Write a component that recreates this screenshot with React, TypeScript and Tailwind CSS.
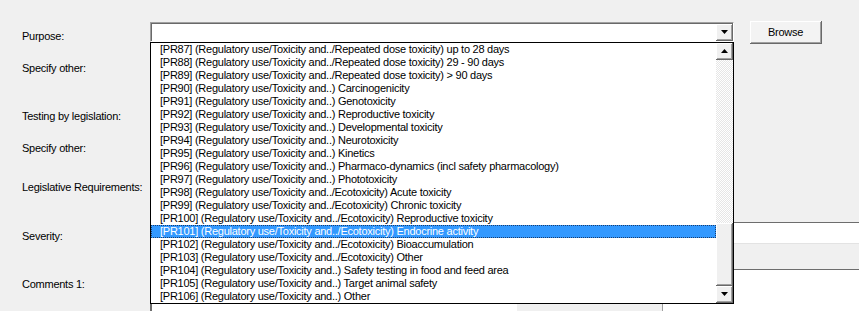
const options = [
  "[PR87] (Regulatory use/Toxicity and../Repeated dose toxicity) up to 28 days",
  "[PR88] (Regulatory use/Toxicity and../Repeated dose toxicity) 29 - 90 days",
  "[PR89] (Regulatory use/Toxicity and../Repeated dose toxicity) > 90 days",
  "[PR90] (Regulatory use/Toxicity and..) Carcinogenicity",
  "[PR91] (Regulatory use/Toxicity and..) Genotoxicity",
  "[PR92] (Regulatory use/Toxicity and..) Reproductive toxicity",
  "[PR93] (Regulatory use/Toxicity and..) Developmental toxicity",
  "[PR94] (Regulatory use/Toxicity and..) Neurotoxicity",
  "[PR95] (Regulatory use/Toxicity and..) Kinetics",
  "[PR96] (Regulatory use/Toxicity and..) Pharmaco-dynamics (incl safety pharmacology)",
  "[PR97] (Regulatory use/Toxicity and..) Phototoxicity",
  "[PR98] (Regulatory use/Toxicity and../Ecotoxicity) Acute toxicity",
  "[PR99] (Regulatory use/Toxicity and../Ecotoxicity) Chronic toxicity",
  "[PR100] (Regulatory use/Toxicity and../Ecotoxicity) Reproductive toxicity",
  "[PR101] (Regulatory use/Toxicity and../Ecotoxicity) Endocrine activity",
  "[PR102] (Regulatory use/Toxicity and../Ecotoxicity) Bioaccumulation",
  "[PR103] (Regulatory use/Toxicity and../Ecotoxicity) Other",
  "[PR104] (Regulatory use/Toxicity and..) Safety testing in food and feed area",
  "[PR105] (Regulatory use/Toxicity and..) Target animal safety",
  "[PR106] (Regulatory use/Toxicity and..) Other",
];

const selectedIndex = 14;

const Arrow = ({ up }: { up?: boolean }) => (
  <svg width="7" height="4" viewBox="0 0 7 4">
    {up ? (
      <polygon points="0,4 7,4 3.5,0" fill="#000" />
    ) : (
      <polygon points="0,0 7,0 3.5,4" fill="#000" />
    )}
  </svg>
);

const ScrollButton = ({ up }: { up?: boolean }) => (
  <div className="flex h-[17px] w-[17px] items-center justify-center border-r border-b border-[#696969] bg-[#f0f0f0] shadow-[inset_1px_1px_0_#fff,inset_-1px_-1px_0_#a0a0a0]">
    <Arrow up={up} />
  </div>
);

const Label = ({ text, mt }: { text: string; mt: string }) => (
  <div className={`w-[150px] shrink-0 whitespace-nowrap pl-[22px] leading-[13px] ${mt}`}>{text}</div>
);

const App = () => {
  return (
    <div
      className="relative h-[311px] w-[859px] overflow-hidden bg-[#f0f0f0] text-[11px] tracking-[-0.25px] text-black"
      style={{ fontFamily: '"Liberation Sans", Arial, sans-serif' }}
    >
      <div className="flex flex-col pt-[22px]">
        {/* Purpose */}
        <div className="flex h-[32px]">
          <Label text="Purpose:" mt="mt-[8px]" />
          <div className="flex h-[20px] w-[584px] shrink-0 justify-end border border-t-[#a0a0a0] border-l-[#a0a0a0] border-r-white border-b-white bg-white shadow-[inset_1px_1px_0_#696969]">
            <div className="mt-[1px] flex h-[17px] w-[17px] items-center justify-center border-r border-b border-[#696969] bg-[#f0f0f0] shadow-[inset_1px_1px_0_#fff,inset_-1px_-1px_0_#a0a0a0]">
              <Arrow />
            </div>
          </div>
          <button className="ml-[16px] mt-[-1px] h-[23px] w-[72px] shrink-0 border-r border-b border-[#696969] bg-[#f3f3f3] shadow-[inset_1px_1px_0_#fff,inset_-1px_-1px_0_#a0a0a0]">
            Browse
          </button>
        </div>
        {/* Specify other */}
        <div className="flex h-[48px]">
          <Label text="Specify other:" mt="mt-[8px]" />
        </div>
        {/* Testing by legislation */}
        <div className="flex h-[32px]">
          <Label text="Testing by legislation:" mt="mt-[8px]" />
        </div>
        {/* Specify other */}
        <div className="flex h-[40px]">
          <Label text="Specify other:" mt="mt-[8px]" />
        </div>
        {/* Legislative Requirements */}
        <div className="flex h-[48px]">
          <Label text="Legislative Requirements:" mt="mt-[7px]" />
        </div>
        {/* Severity */}
        <div className="flex h-[48px]">
          <Label text="Severity:" mt="mt-[8px]" />
          <div className="flex flex-1 flex-col">
            <div className="h-[21px] border-t border-[#6d6d6d] bg-white" />
            <div className="h-[27px] border-t border-b border-t-[#e3e3e3] border-b-[#6d6d6d] bg-[#f0f0f0]" />
          </div>
        </div>
        {/* Comments 1 */}
        <div className="flex h-[60px]">
          <Label text="Comments 1:" mt="mt-[8px]" />
          <div className="flex flex-1">
            <div className="w-[367px] border-l-2 border-[#6d6d6d] bg-white" />
            <div className="w-[146px] border-r border-[#a0a0a0] bg-[#f0f0f0]" />
            <div className="flex-1 bg-white" />
          </div>
        </div>
      </div>

      {/* open dropdown list */}
      <div className="absolute left-[150px] top-[42px] flex h-[262px] w-[584px] border border-black bg-white">
        <ul className="flex w-[565px] flex-col">
          {options.map((opt, i) => (
            <li
              key={opt}
              className={
                i === selectedIndex
                  ? "h-[13px] whitespace-nowrap border border-dotted border-[#1a3d6e] bg-[#3399ff] pl-[8px] leading-[11px] text-white"
                  : "h-[13px] whitespace-nowrap pl-[9px] leading-[13px]"
              }
            >
              {opt}
            </li>
          ))}
        </ul>
        <div className="flex w-[17px] flex-col">
          <ScrollButton up />
          <div className="h-[163px] bg-[repeating-conic-gradient(#e6e6e6_0_25%,#ffffff_0_50%)] bg-[length:2px_2px]" />
          <div className="h-[63px] border-r border-b border-[#696969] bg-[#f0f0f0] shadow-[inset_1px_1px_0_#fff,inset_-1px_-1px_0_#a0a0a0]" />
          <ScrollButton />
        </div>
      </div>
    </div>
  );
};

export default App;
